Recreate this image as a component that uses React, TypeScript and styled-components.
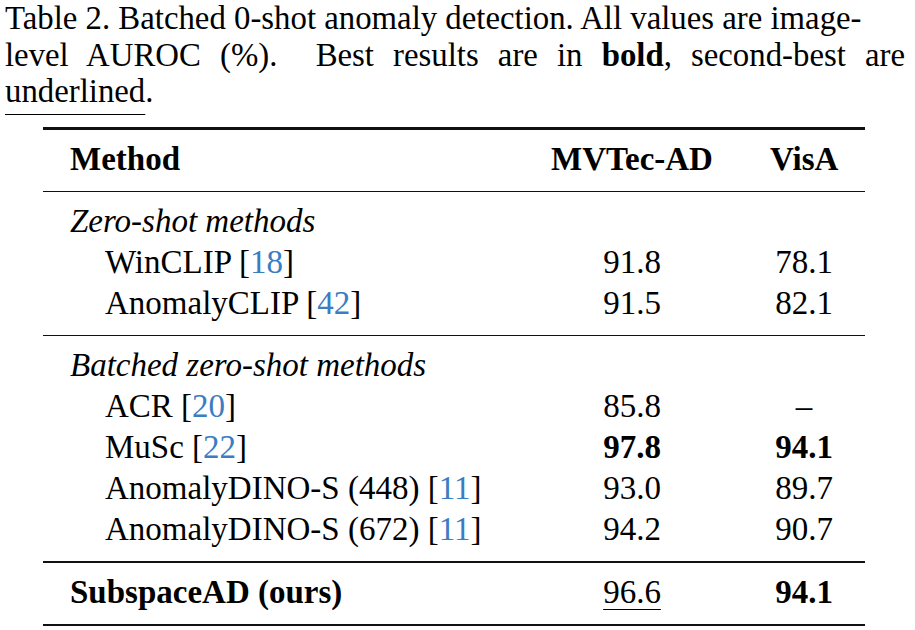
import React from "react";
import styled, { createGlobalStyle } from "styled-components";

const GlobalStyle = createGlobalStyle`
  html, body {
    margin: 0;
    padding: 0;
    background: #ffffff;
  }
  body {
    font-family: "Liberation Serif", "Times New Roman", serif;
    color: #000000;
  }
`;

const Page = styled.div`
  width: 915px;
  height: 630px;
  overflow: hidden;
  box-sizing: border-box;
  padding: 0 10px 0 5px;
`;

const Caption = styled.div`
  font-size: 32.8px;
  line-height: 36.5px;
`;

const CaptionLine = styled.div<{ $justify?: boolean }>`
  white-space: nowrap;
  text-align: ${(p) => (p.$justify ? "justify" : "left")};
  text-align-last: ${(p) => (p.$justify ? "justify" : "left")};
  ${(p) => p.$justify && "white-space: normal;"}
`;

const Under = styled.span<{ $offset?: number }>`
  text-decoration: underline;
  text-decoration-thickness: 1.3px;
  text-underline-offset: ${(p) => p.$offset ?? 6}px;
`;

const Table = styled.div`
  margin: 17.5px 0 0 38px;
  width: 822px;
  font-size: 33px;
`;

const Rule = styled.div<{ $thick?: boolean }>`
  height: ${(p) => (p.$thick ? 2.5 : 1.4)}px;
  background: #111111;
`;

const Section = styled.div`
  padding: 9px 0 11px;
`;

const Row = styled.div`
  display: grid;
  grid-template-columns: 478px 222px 122px;
  height: 41px;
  line-height: 41px;
`;

const Cell = styled.div<{
  $center?: boolean;
  $indent?: boolean;
  $bold?: boolean;
  $italic?: boolean;
}>`
  padding: 0 27px 0 ${(p) => (p.$indent ? 62 : 27)}px;
  ${(p) => p.$center && "padding-left: 27px;"}
  text-align: ${(p) => (p.$center ? "center" : "left")};
  font-weight: ${(p) => (p.$bold ? 700 : 400)};
  font-style: ${(p) => (p.$italic ? "italic" : "normal")};
  white-space: nowrap;
`;

const Cite = styled.span`
  color: #3a7dc2;
`;

type Value = { text: string; bold?: boolean; under?: boolean };

type MethodRow = {
  name: string;
  cite?: string;
  mvtec: Value;
  visa: Value;
};

const zeroShot: MethodRow[] = [
  { name: "WinCLIP", cite: "18", mvtec: { text: "91.8" }, visa: { text: "78.1" } },
  { name: "AnomalyCLIP", cite: "42", mvtec: { text: "91.5" }, visa: { text: "82.1" } },
];

const batched: MethodRow[] = [
  { name: "ACR", cite: "20", mvtec: { text: "85.8" }, visa: { text: "–" } },
  {
    name: "MuSc",
    cite: "22",
    mvtec: { text: "97.8", bold: true },
    visa: { text: "94.1", bold: true },
  },
  { name: "AnomalyDINO-S (448)", cite: "11", mvtec: { text: "93.0" }, visa: { text: "89.7" } },
  { name: "AnomalyDINO-S (672)", cite: "11", mvtec: { text: "94.2" }, visa: { text: "90.7" } },
];

function ValueCell({ value }: { value: Value }) {
  return (
    <Cell $center $bold={value.bold}>
      {value.under ? <Under>{value.text}</Under> : value.text}
    </Cell>
  );
}

function DataRow({ row }: { row: MethodRow }) {
  return (
    <Row>
      <Cell $indent>
        {row.name} [<Cite>{row.cite}</Cite>]
      </Cell>
      <ValueCell value={row.mvtec} />
      <ValueCell value={row.visa} />
    </Row>
  );
}

function GroupTitle({ children }: { children: React.ReactNode }) {
  return (
    <Row>
      <Cell $italic>{children}</Cell>
      <Cell />
      <Cell />
    </Row>
  );
}

export default function App() {
  return (
    <>
      <GlobalStyle />
      <Page>
        <Caption>
          <CaptionLine>
            Table 2. Batched 0-shot anomaly detection. All values are image-
          </CaptionLine>
          <CaptionLine $justify>
            level AUROC (%).&nbsp; Best results are in <b>bold</b>, second-best are
          </CaptionLine>
          <CaptionLine>
            <Under $offset={12}>underlined</Under>.
          </CaptionLine>
        </Caption>

        <Table>
          <Rule $thick />
          <Section>
            <Row>
              <Cell $bold>Method</Cell>
              <Cell $center $bold>
                MVTec-AD
              </Cell>
              <Cell $center $bold>
                VisA
              </Cell>
            </Row>
          </Section>
          <Rule />
          <Section>
            <GroupTitle>Zero-shot methods</GroupTitle>
            {zeroShot.map((r) => (
              <DataRow key={r.name} row={r} />
            ))}
          </Section>
          <Rule />
          <Section>
            <GroupTitle>Batched zero-shot methods</GroupTitle>
            {batched.map((r) => (
              <DataRow key={r.name} row={r} />
            ))}
          </Section>
          <Rule />
          <Section>
            <Row>
              <Cell $bold>SubspaceAD (ours)</Cell>
              <ValueCell value={{ text: "96.6", under: true }} />
              <ValueCell value={{ text: "94.1", bold: true }} />
            </Row>
          </Section>
          <Rule $thick />
        </Table>
      </Page>
    </>
  );
}
